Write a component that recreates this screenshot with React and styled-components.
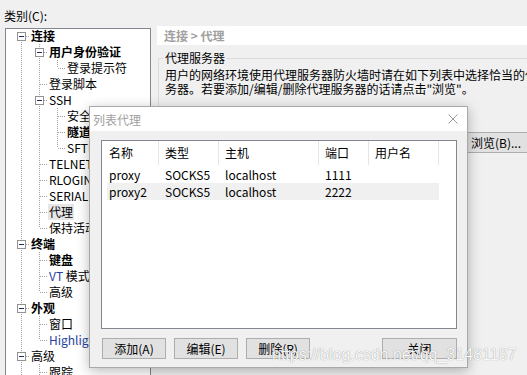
import React from 'react';
import styled, { createGlobalStyle } from 'styled-components';

const GlobalStyle = createGlobalStyle`
  html, body { margin: 0; padding: 0; background: #f0f0f0; }
  body {
    font-family: "Noto Sans CJK SC", "Noto Sans", sans-serif;
    font-size: 12px;
    color: #000;
  }
  * { box-sizing: border-box; }
`;

const Screen = styled.div`
  position: relative;
  width: 527px;
  height: 375px;
  overflow: hidden;
  display: flex;
  background: #f0f0f0;
`;

const LeftCol = styled.div`
  width: 151px;
  flex: none;
  display: flex;
  flex-direction: column;
  padding: 8px 0 0 4px;
`;

const CategoryLabel = styled.div`
  height: 16px;
  line-height: 16px;
  white-space: nowrap;
`;

const TreeBox = styled.div`
  flex: 1;
  margin: 4px 0 0 1px;
  background: #fff;
  border: 1px solid #828790;
  border-bottom: none;
  padding-left: 6px;
  overflow: hidden;
`;

const TreeList = styled.div`
  margin-top: -1px;
`;

const TreeRow = styled.div`
  display: flex;
  height: 16px;
  align-items: center;
`;

const Cell = styled.svg`
  flex: none;
  width: 18px;
  height: 16px;
  display: block;
`;

const NodeLabel = styled.span`
  padding: 0 1px;
  line-height: 16px;
  white-space: nowrap;
  font-weight: ${p => (p.$bold ? 700 : 400)};
  background: ${p => (p.$selected ? '#e6e6e6' : 'transparent')};
`;

const Latin = styled.span`
  color: #1f3fa0;
`;

const RightCol = styled.div`
  flex: 1;
  min-width: 0;
  padding: 26px 0 0 6px;
  display: flex;
  flex-direction: column;
`;

const PathBar = styled.div`
  height: 19px;
  line-height: 19px;
  padding-left: 7px;
  background: #fff;
  color: #a0a0a0;
  font-weight: 700;
  white-space: nowrap;
`;

const Group = styled.fieldset`
  margin: 6px 0 0 1px;
  padding: 0 0 0 4px;
  border: 1px solid #dcdcdc;
  border-right: none;
  border-bottom: none;
  height: 300px;
  min-width: 0;
`;

const GroupLegend = styled.legend`
  padding: 0 2px;
  line-height: 14px;
`;

const Description = styled.div`
  margin-top: ${p => (p.$first ? 3 : 0)}px;
  padding-left: 2px;
  line-height: 14px;
  white-space: nowrap;
`;

const BrowseRow = styled.div`
  display: flex;
  margin-top: 36px;
  padding-left: 293px;
`;

const WinButton = styled.button`
  flex: none;
  width: ${p => p.$w || 64}px;
  height: 21px;
  padding: 0;
  border: 1px solid #adadad;
  background: #e1e1e1;
  font: inherit;
  color: #000;
  line-height: 19px;
  text-align: center;
  white-space: nowrap;
`;

const Dialog = styled.div`
  position: absolute;
  left: 89px;
  top: 106px;
  width: 379px;
  height: 262px;
  border: 1px solid #a9a9a9;
  background: #f0f0f0;
  box-shadow: 0 3px 12px rgba(0, 0, 0, 0.28);
  display: flex;
  flex-direction: column;
  z-index: 5;
`;

const TitleBar = styled.div`
  height: 24px;
  flex: none;
  background: #fff;
  display: flex;
  align-items: center;
  justify-content: space-between;
  padding: 0 9px 0 3px;
  color: #a0a0a0;
`;

const DialogBody = styled.div`
  flex: 1;
  display: flex;
  flex-direction: column;
  padding: 9px 10px 8px 11px;
`;

const ListView = styled.div`
  height: 189px;
  flex: none;
  background: #fff;
  border: 1px solid #828790;
`;

const ListHeader = styled.div`
  display: grid;
  grid-template-columns: 57px 60px 100px 50px 70px;
  height: 25px;
`;

const HeaderCell = styled.div`
  padding-left: ${p => (p.$first ? 7 : 6)}px;
  height: 24px;
  line-height: 24px;
  border-right: 1px solid #e5e5e5;
  white-space: nowrap;
`;

const ListRow = styled.div`
  display: grid;
  grid-template-columns: 52px 60px 100px 50px 70px;
  margin-left: 5px;
  width: 332px;
  height: 17px;
  line-height: 17px;
  background: ${p => (p.$hot ? '#f0f0f0' : 'transparent')};
`;

const ListCell = styled.div`
  padding-left: ${p => (p.$first ? 2 : 6)}px;
  white-space: nowrap;
  overflow: hidden;
`;

const ButtonRow = styled.div`
  display: flex;
  gap: 8px;
  margin-top: 9px;
  padding-left: 1px;
`;

const Spacer = styled.div`
  flex: 1;
`;

const Watermark = styled.div`
  position: absolute;
  left: 272px;
  top: 346px;
  font-family: "Liberation Sans", Arial, sans-serif;
  font-size: 16px;
  color: rgba(255, 255, 255, 0.95);
  text-shadow: 0 0 1px rgba(0, 0, 0, 0.45);
  white-space: nowrap;
  z-index: 10;
  pointer-events: none;
`;

const tree = [
  { d: 0, t: '连接', b: true, exp: true, first: true },
  { d: 1, t: '用户身份验证', b: true, exp: true },
  { d: 2, t: '登录提示符', last: true },
  { d: 1, t: '登录脚本' },
  { d: 1, t: 'SSH', exp: true },
  { d: 2, t: '安全外壳' },
  { d: 2, t: '隧道', b: true },
  { d: 2, t: 'SFTP 会话', last: true },
  { d: 1, t: 'TELNET' },
  { d: 1, t: 'RLOGIN' },
  { d: 1, t: 'SERIAL' },
  { d: 1, t: '代理', sel: true },
  { d: 1, t: '保持活动', last: true },
  { d: 0, t: '终端', b: true, exp: true },
  { d: 1, t: '键盘', b: true },
  { d: 1, t: '模式', vt: true },
  { d: 1, t: '高级', last: true },
  { d: 0, t: '外观', b: true, exp: true },
  { d: 1, t: '窗口' },
  { d: 1, t: 'Highlight', last: true, blue: true },
  { d: 0, t: '高级', exp: true },
  { d: 1, t: '跟踪' },
  { d: 1, t: '日志文件' },
];

const DOT = '#a0a0a0';

function GuideCell({ on }) {
  return (
    <Cell viewBox="0 0 18 16" shapeRendering="crispEdges">
      {on && <line x1="9.5" y1="0" x2="9.5" y2="16" stroke={DOT} strokeDasharray="1 1" />}
    </Cell>
  );
}

function ConnectorCell({ top, bottom, exp }) {
  return (
    <Cell viewBox="0 0 18 16" shapeRendering="crispEdges">
      {top && <line x1="9.5" y1="0" x2="9.5" y2="8" stroke={DOT} strokeDasharray="1 1" />}
      {bottom && <line x1="9.5" y1="8" x2="9.5" y2="16" stroke={DOT} strokeDasharray="1 1" />}
      <line x1="10" y1="8.5" x2="18" y2="8.5" stroke={DOT} strokeDasharray="1 1" />
      {exp && (
        <g>
          <rect x="5.5" y="4.5" width="8" height="8" fill="#fff" stroke="#919191" />
          <line x1="7" y1="8.5" x2="12" y2="8.5" stroke="#1e2e5a" />
        </g>
      )}
    </Cell>
  );
}

function Tree() {
  const open = [];
  return tree.map((n, i) => {
    const guides = [];
    for (let l = 0; l < n.d; l++) guides.push(<GuideCell key={l} on={!!open[l]} />);
    const top = !n.first;
    const bottom = n.d === 0 ? true : !n.last;
    open[n.d] = n.d === 0 ? true : !n.last;
    return (
      <TreeRow key={i}>
        {guides}
        <ConnectorCell top={top} bottom={bottom} exp={n.exp} />
        <NodeLabel $bold={n.b} $selected={n.sel}>
          {n.vt && <Latin>VT </Latin>}
          {n.blue ? <Latin>{n.t}</Latin> : n.t}
        </NodeLabel>
      </TreeRow>
    );
  });
}

const rows = [
  ['proxy', 'SOCKS5', 'localhost', '1111', ''],
  ['proxy2', 'SOCKS5', 'localhost', '2222', ''],
];

export default function App() {
  return (
    <Screen>
      <GlobalStyle />
      <LeftCol>
        <CategoryLabel>类别(C):</CategoryLabel>
        <TreeBox>
          <TreeList>
            <Tree />
          </TreeList>
        </TreeBox>
      </LeftCol>
      <RightCol>
        <PathBar>连接 &gt; 代理</PathBar>
        <Group>
          <GroupLegend>代理服务器</GroupLegend>
          <Description $first>用户的网络环境使用代理服务器防火墙时请在如下列表中选择恰当的代理服</Description>
          <Description>务器。若要添加/编辑/删除代理服务器的话请点击"浏览"。</Description>
          <BrowseRow>
            <WinButton $w={80}>浏览(B)...</WinButton>
          </BrowseRow>
        </Group>
      </RightCol>

      <Dialog>
        <TitleBar>
          <span>列表代理</span>
          <svg width="10" height="10" viewBox="0 0 10 10">
            <path d="M0.5 0.5 L9.5 9.5 M9.5 0.5 L0.5 9.5" stroke="#9a9a9a" strokeWidth="1" fill="none" />
          </svg>
        </TitleBar>
        <DialogBody>
          <ListView>
            <ListHeader>
              <HeaderCell $first>名称</HeaderCell>
              <HeaderCell>类型</HeaderCell>
              <HeaderCell>主机</HeaderCell>
              <HeaderCell>端口</HeaderCell>
              <HeaderCell>用户名</HeaderCell>
            </ListHeader>
            {rows.map((r, i) => (
              <ListRow key={i} $hot={i === 1}>
                {r.map((c, j) => (
                  <ListCell key={j} $first={j === 0}>{c}</ListCell>
                ))}
              </ListRow>
            ))}
          </ListView>
          <ButtonRow>
            <WinButton>添加(A)</WinButton>
            <WinButton>编辑(E)</WinButton>
            <WinButton>删除(R)</WinButton>
            <Spacer />
            <WinButton $w={75}>关闭</WinButton>
          </ButtonRow>
        </DialogBody>
      </Dialog>

      <Watermark>https://blog.csdn.net/qq_31481187</Watermark>
    </Screen>
  );
}
